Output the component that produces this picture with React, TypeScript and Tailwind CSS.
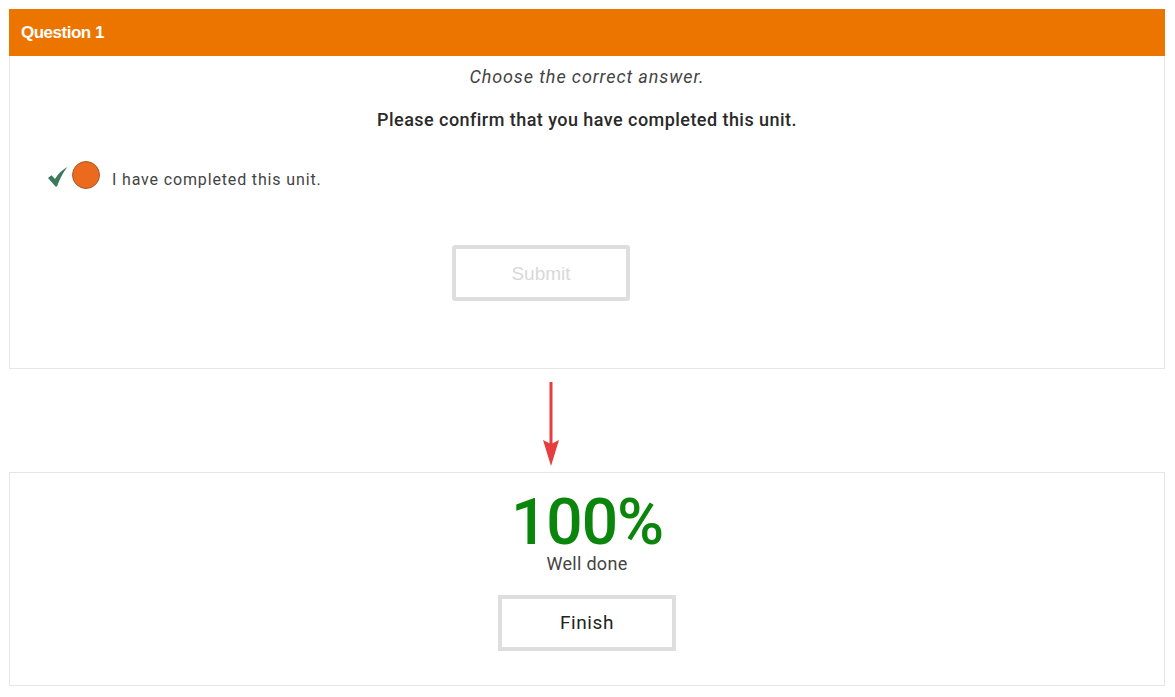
import React from "react";

export default function App() {
  return (
    <div className="w-[1175px] h-[697px] bg-white pl-[9px] pr-[10px] pt-[9px] font-['Roboto','Liberation_Sans',sans-serif]">
      <div className="border border-[#e6e6e6] h-[360px] flex flex-col">
        <div className="h-[47px] bg-[#ec7500] flex items-center px-[12px] -mx-px -mt-px">
          <span className="text-white font-bold text-[17px] tracking-[-0.5px] font-['Liberation_Sans',sans-serif]">Question 1</span>
        </div>
        <div className="flex flex-col items-center">
          <p className="mt-[9px] italic text-[18px] text-[#444] leading-[24px] tracking-[0.9px]">Choose the correct answer.</p>
          <p className="mt-[19px] text-[18px] font-medium text-[#2a2a2a] leading-[24px] tracking-[0.45px]">Please confirm that you have completed this unit.</p>
        </div>
        <div className="flex items-start mt-[29px] pl-[38px] h-[28px]">
          <svg width="20" height="20" viewBox="0 0 20 20" className="mr-[4px] mt-[6px]">
            <path d="M0 11 L3.5 8.2 L7 12 Q11 4.5 19.5 0 Q13.5 7 9 19.5 L7.5 19.5 Z" fill="#3d7a5c" />
          </svg>
          <div className="w-[28px] h-[28px] rounded-full bg-[#ec6a1e] border border-[#a85a2a]" />
          <span className="ml-[12px] mt-[7px] text-[16px] leading-[24px] text-[#444] tracking-[0.85px]">I have completed this unit.</span>
        </div>
        <div className="flex justify-center mt-[56px] pr-[92px]">
          <div className="w-[178px] h-[56px] border-[4px] border-[#dedede] rounded-[3px] flex items-center justify-center pt-[3px] text-[19px] text-[#d8d8d8] font-['Liberation_Sans',sans-serif]">
            Submit
          </div>
        </div>
      </div>
      <div className="h-[103px] flex justify-center pt-[13px] pr-[72px]">
        <svg width="20" height="86" viewBox="0 0 20 86">
          <line x1="10" y1="0" x2="10" y2="64" stroke="#e53e3e" strokeWidth="3" />
          <path d="M2 58 L10 62 L18 58 L10 84 Z" fill="#e53e3e" />
        </svg>
      </div>
      <div className="border border-[#e6e6e6] h-[214px] flex flex-col items-center">
        <div className="mt-[22px] text-[64px] leading-[56px] text-[#0b850b] font-medium tracking-[-1px]">100%</div>
        <div className="mt-[2px] text-[18px] text-[#444] leading-[22px] tracking-[0.3px]">Well done</div>
        <div className="mt-[20px] w-[178px] h-[56px] border-[4px] border-[#dedede] flex items-center justify-center text-[19px] text-[#222] tracking-[0.6px]">
          Finish
        </div>
      </div>
    </div>
  );
}
